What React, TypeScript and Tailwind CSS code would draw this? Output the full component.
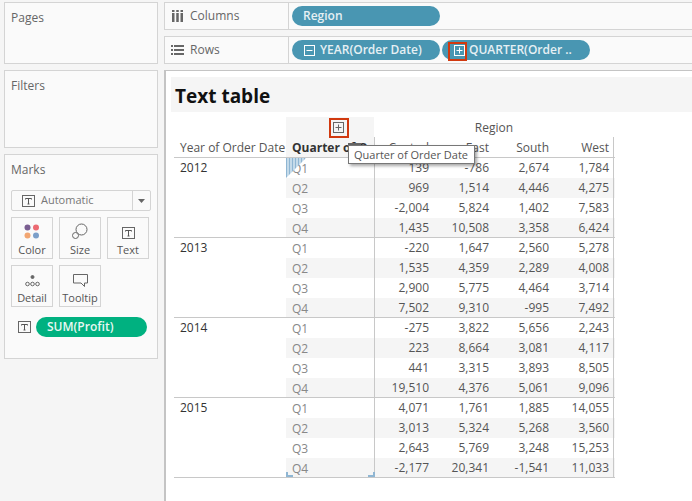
const font = 'font-["Open_Sans",sans-serif]'

const TABLE = [
  { year: '2012', rows: [['139', '-786', '2,674', '1,784'], ['969', '1,514', '4,446', '4,275'], ['-2,004', '5,824', '1,402', '7,583'], ['1,435', '10,508', '3,358', '6,424']] },
  { year: '2013', rows: [['-220', '1,647', '2,560', '5,278'], ['1,535', '4,359', '2,289', '4,008'], ['2,900', '5,775', '4,464', '3,714'], ['7,502', '9,310', '-995', '7,492']] },
  { year: '2014', rows: [['-275', '3,822', '5,656', '2,243'], ['223', '8,664', '3,081', '4,117'], ['441', '3,315', '3,893', '8,505'], ['19,510', '4,376', '5,061', '9,096']] },
  { year: '2015', rows: [['4,071', '1,761', '1,885', '14,055'], ['3,013', '5,324', '5,268', '3,560'], ['2,643', '5,769', '3,248', '15,253'], ['-2,177', '20,341', '-1,541', '11,033']] },
]

function TextBox({ size = 13 }: { size?: number }) {
  return (
    <svg width={size} height={size - 1} viewBox="0 0 13 12" fill="none" className="shrink-0">
      <rect x="0.5" y="0.5" width="12" height="11" stroke="#666" />
      <path d="M3.5 3.5h6M6.5 3.5v5.5M5.5 9h2M3.5 3.5v1M9.5 3.5v1" stroke="#555" />
    </svg>
  )
}

function ExpandBox({ minus, color = '#fff' }: { minus?: boolean; color?: string }) {
  return (
    <svg width="11" height="11" viewBox="0 0 11 11" fill="none" className="shrink-0">
      <rect x="0.5" y="0.5" width="10" height="10" stroke={color} />
      <path d={minus ? 'M2.5 5.5h6' : 'M2.5 5.5h6M5.5 2.5v6'} stroke={color} />
    </svg>
  )
}

function Pill({ className, children }: { className: string; children: React.ReactNode }) {
  return (
    <div className={`h-5 rounded-full bg-[#4996b2] flex items-center text-[12px] font-semibold text-[#e6f0f4] whitespace-nowrap ${className}`}>
      {children}
    </div>
  )
}

function MarkButton({ label, children }: { label: string; children: React.ReactNode }) {
  return (
    <div className="h-[42px] border border-[#d4d4d4] flex flex-col items-center text-[11px] text-[#555] leading-[12px]">
      <div className="h-[21px] flex items-end justify-center">{children}</div>
      <span className="mt-[5px]">{label}</span>
    </div>
  )
}

function Card({ title, className, children }: { title: string; className: string; children?: React.ReactNode }) {
  return (
    <div className={`border border-[#d4d4d4] bg-[#fafafa] px-[6px] text-[12px] text-[#666] ${className}`}>
      <div className="pt-[6px] leading-[17px]">{title}</div>
      {children}
    </div>
  )
}

export default function App() {
  return (
    <div className={`relative w-[692px] h-[501px] overflow-hidden bg-[#f5f5f5] flex ${font}`}>
      <div className="w-[164px] shrink-0 pl-1 pr-[6px] pt-[2px] flex flex-col gap-[6px]">
        <Card title="Pages" className="h-[62px]" />
        <Card title="Filters" className="h-[78px]" />
        <Card title="Marks" className="h-[205px]">
          <div className="mt-[12px] h-[21px] border border-[#d4d4d4] rounded-[2px] flex items-center">
            <div className="flex-1 flex items-center pl-[10px] gap-[6px] text-[11px] text-[#777]">
              <TextBox />
              Automatic
            </div>
            <div className="w-[18px] h-full border-l border-[#d4d4d4] flex items-center justify-center">
              <svg width="7" height="4" viewBox="0 0 7 4"><path d="M0 0h7L3.500 4z" fill="#666" /></svg>
            </div>
          </div>
          <div className="mt-[6px] grid grid-cols-[42px_42px_42px] gap-x-[6px] gap-y-[6px]">
            <MarkButton label="Color">
              <svg width="16" height="15" viewBox="0 0 16 15">
                <circle cx="3.500" cy="3.500" r="3" fill="#7a5e91" />
                <circle cx="12" cy="3.500" r="3" fill="#ec6a72" />
                <circle cx="3.500" cy="11.500" r="3" fill="#f2a672" />
                <circle cx="12" cy="11.500" r="3" fill="#7c9fc9" />
              </svg>
            </MarkButton>
            <MarkButton label="Size">
              <svg width="16" height="16" viewBox="0 0 16 16" fill="none" stroke="#666">
                <circle cx="9.500" cy="6.500" r="5.500" />
                <circle cx="3.500" cy="12.500" r="3" fill="#fafafa" />
              </svg>
            </MarkButton>
            <MarkButton label="Text">
              <TextBox />
            </MarkButton>
            <MarkButton label="Detail">
              <svg width="15" height="12" viewBox="0 0 15 12" fill="none" stroke="#666">
                <circle cx="7.500" cy="2" r="1.500" fill="#666" />
                <circle cx="2.500" cy="9" r="1.800" />
                <circle cx="7.500" cy="9" r="1.800" />
                <circle cx="12.500" cy="9" r="1.800" />
              </svg>
            </MarkButton>
            <MarkButton label="Tooltip">
              <svg width="15" height="13" viewBox="0 0 15 13" fill="none" stroke="#666">
                <path d="M0.500 0.500h14v8.500h-3v3.500l-3.500-3.500h-7.500z" />
              </svg>
            </MarkButton>
          </div>
          <div className="mt-[10px] flex items-center pl-[7px] gap-[5px]">
            <TextBox />
            <div className="w-[111px] h-5 rounded-full bg-[#00b180] flex items-center pl-[11px] text-[12px] font-semibold text-[#e8f8f3]">
              SUM(Profit)
            </div>
          </div>
        </Card>
      </div>

      <div className="flex-1 min-w-0 flex flex-col">
        <div className="mt-[2px] h-[28px] border border-r-0 border-[#d4d4d4] bg-[#fafafa] flex items-center">
          <div className="w-[124px] h-full border-r border-[#d4d4d4] flex items-center pl-[7px] gap-[7px] text-[12px] text-[#666]">
            <svg width="11" height="12" viewBox="0 0 11 12" fill="#666"><path d="M0 0h2.500v2H0zM0 3h2.500v9H0zM4.250 0h2.500v2h-2.500zM4.250 3h2.500v9h-2.500zM8.500 0H11v2H8.500zM8.500 3H11v9H8.500z" /></svg>
            Columns
          </div>
          <Pill className="ml-[3px] w-[148px] pl-[11px]">Region</Pill>
        </div>
        <div className="mt-[6px] h-[28px] border border-r-0 border-[#d4d4d4] bg-[#fafafa] flex items-center">
          <div className="w-[124px] h-full border-r border-[#d4d4d4] flex items-center pl-[6px] gap-[6px] text-[12px] text-[#666]">
            <svg width="13" height="10" viewBox="0 0 13 10" fill="#666"><path d="M0 0h2v2H0zM3 0h10v2H3zM0 4h2v2H0zM3 4h10v2H3zM0 8h2v2H0zM3 8h10v2H3z" /></svg>
            Rows
          </div>
          <Pill className="ml-[3px] w-[148px] pl-[12px] gap-[5px]">
            <ExpandBox minus />
            YEAR(Order Date)
          </Pill>
          <Pill className="ml-[2px] w-[148px] pl-[12px] gap-[4px]">
            <ExpandBox />
            QUARTER(Order ..
          </Pill>
        </div>

        <div className="mt-[6px] flex-1 bg-white border-l-2 border-t border-[#c4c4c4] pl-[5px] pt-[6px]">
          <div className="h-[35px] bg-[#f5f5f5] pl-[4px] pt-[3px] flex items-center text-[19px] font-bold text-[#111]">Text table</div>
          <div className="ml-[3px] mt-[5px] w-[441px] text-[12px] text-[#555]">
            <div className="flex h-5 leading-5">
              <div className="w-[112px]" />
              <div className="w-[88px] bg-[#f5f5f5] flex justify-center">
                <span className="mt-[5px] ml-[16px]"><ExpandBox color="#666" /></span>
              </div>
              <div className="w-[240px] text-center pt-[1px]">Region</div>
            </div>
            <div className="flex h-[21px] leading-5 border-b border-[#c8c8c8]">
              <div className="w-[112px] pl-[6px] pt-[1px] whitespace-nowrap">Year of Order Date</div>
              <div className="w-[88px] bg-[#f5f5f5] pl-[6px] pt-[1px] font-bold text-[#333] whitespace-nowrap overflow-hidden">Quarter of Order Date</div>
              {['Central', 'East', 'South', 'West'].map((h, i) => (
                <div key={h} className={`w-[60px] text-right pt-[1px] ${i === 0 ? 'border-l border-[#c8c8c8]' : ''} ${i === 3 ? 'pr-[4px] border-r border-[#c8c8c8]' : 'pr-[5px]'}`}>{h}</div>
              ))}
            </div>
            {TABLE.map(group => (
              <div key={group.year} className="flex h-[80px] border-b border-[#c8c8c8]">
                <div className="w-[112px] pl-[6px] leading-5 font-medium text-[#333]">{group.year}</div>
                <div className="flex-1">
                  {group.rows.map((row, r) => (
                    <div key={r} className={`flex leading-[22px] ${r === 3 ? 'h-[19px]' : 'h-5'} ${r % 2 === 1 ? 'bg-[#f5f5f5]' : ''}`}>
                      <div className="w-[88px] pl-[6px] text-[#888]">Q{r + 1}</div>
                      {row.map((v, c) => (
                        <div key={c} className={`w-[60px] text-right leading-5 ${c === 0 ? 'border-l border-[#c8c8c8]' : ''} ${c === 3 ? 'pr-[4px] border-r border-[#c8c8c8]' : 'pr-[5px]'}`}>{v}</div>
                      ))}
                    </div>
                  ))}
                </div>
              </div>
            ))}
          </div>
        </div>
      </div>

      {/* overlays: annotation boxes, tooltip, selection marks */}
      <div className="absolute left-[448px] top-[42px] w-[19px] h-[19px] border-2 border-[#d1390f]" />
      <div className="absolute left-[329px] top-[118px] w-[20px] h-[20px] border-2 border-[#d1390f]" />
      <div className="absolute left-[348px] top-[143px] w-[13px] h-[3px] bg-[#666]" />
      <div className="absolute left-[348px] top-[145px] w-[127px] h-[19px] bg-white border border-[#777] shadow-[2px_2px_3px_rgba(0,0,0,0.35)] pl-[5px] text-[11px] leading-[17px] text-[#555] whitespace-nowrap">
        Quarter of Order Date
      </div>
      <svg className="absolute left-[286px] top-[158px]" width="20" height="20" viewBox="0 0 20 20">
        <defs>
          <pattern id="hatch" width="3" height="3" patternUnits="userSpaceOnUse">
            <rect width="3" height="3" fill="#c4dae9" />
            <rect width="1" height="3" fill="#8fb6d3" />
          </pattern>
        </defs>
        <path d="M0 0h20L0 20z" fill="url(#hatch)" />
      </svg>
      <div className="absolute left-[286px] top-[472px] w-[7px] h-[5px] border-l-2 border-b-2 border-[#8fb6d3]" />
      <div className="absolute left-[368px] top-[472px] w-[7px] h-[5px] border-r-2 border-b-2 border-[#8fb6d3]" />
    </div>
  )
}
